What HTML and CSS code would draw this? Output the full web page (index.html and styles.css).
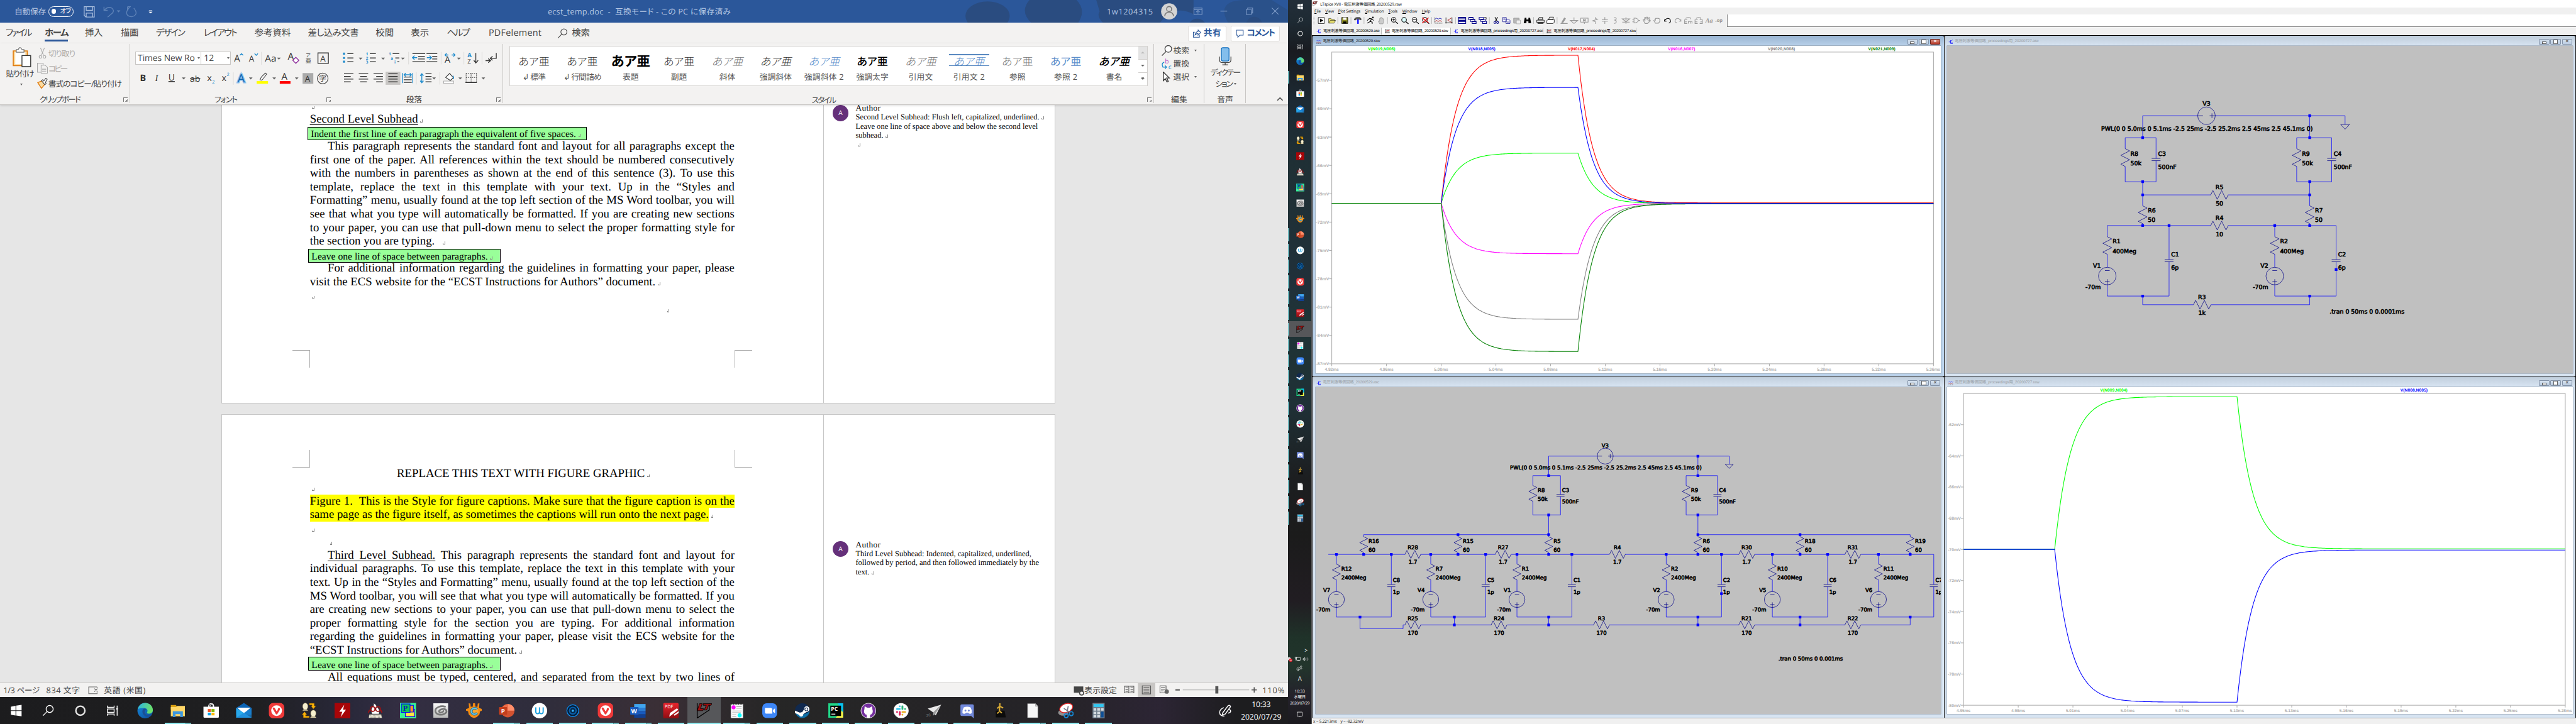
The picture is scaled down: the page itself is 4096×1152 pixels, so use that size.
FILE: index.html
```html
<!DOCTYPE html>
<html lang="ja">
<head>
<meta charset="utf-8">
<title>ecst_temp.doc</title>
<link rel="stylesheet" href="styles.css">
</head>
<body>
<svg class="defs" width="0" height="0" aria-hidden="true">
<defs>
<linearGradient id="edgeA" x1="0" y1="0" x2="1" y2="0.3"><stop offset="0" stop-color="#2bb3e8"/><stop offset="1" stop-color="#6be06a"/></linearGradient>
<linearGradient id="edgeB" x1="0" y1="0" x2="1" y2="1"><stop offset="0" stop-color="#1589dc"/><stop offset="1" stop-color="#0c4c9a"/></linearGradient>
<linearGradient id="clipG" x1="0" y1="0" x2="0" y2="1"><stop offset="0" stop-color="#fafafa"/><stop offset="1" stop-color="#b9b9b9"/></linearGradient>
<linearGradient id="redG" x1="0" y1="0" x2="0" y2="1"><stop offset="0" stop-color="#e8242c"/><stop offset="1" stop-color="#8f0d12"/></linearGradient>
</defs>
<symbol id="i-start" viewBox="0 0 48 48"><path fill="#fff" d="M8 12l14-2.5V23H8zM24 9l16-2.500V23H24zM8 25h14v13.500L8 36zM24 25h16v16l-16-2.500z"/></symbol>
<symbol id="i-search" viewBox="0 0 48 48"><g fill="none" stroke="#fff" stroke-width="2.500"><circle cx="28" cy="19" r="10.500"/><path d="M20.500 26.500L8 39"/></g></symbol>
<symbol id="i-cortana" viewBox="0 0 48 48"><circle cx="24" cy="24" r="13.500" fill="none" stroke="#e4e4e4" stroke-width="4.500"/></symbol>
<symbol id="i-task" viewBox="0 0 48 48"><g fill="none" stroke="#fff" stroke-width="2.500"><path d="M9 9v5h20V9M9 39v-5h20v5M9 19h20v10H9zM38 9v6M38 21v18"/></g><path fill="#fff" d="M35.500 16h5v5h-5z"/></symbol>
<symbol id="i-edge" viewBox="0 0 48 48"><circle cx="24" cy="24" r="23" fill="url(#edgeB)"/><path fill="url(#edgeA)" d="M2 19C6 5 17 0 26 1c13 1 21 11 21 21 0 7-5 11-11 11-5 0-8-2-6-5 3-4 0-12-9-12C12 16 6 18 2 19z"/><path fill="#1b4f95" d="M20 18c-8 6-4 21 8 24 7 1 13-2 15-5-8 3-20 0-20-9 0-5 3-6 5-6-2-3-5-4-8-4z"/></symbol>
<symbol id="i-folder" viewBox="0 0 48 48"><path fill="#d9a013" d="M3 7h15l4 5v9H3z"/><path fill="#ffd667" d="M3 13h16l3-3h23v31H3z"/><path fill="#3d97de" d="M9 26h30v17h-8V34H17v9H9z"/></symbol>
<symbol id="i-store" viewBox="0 0 48 48"><path fill="none" stroke="#fff" stroke-width="2" d="M16 13c0-14 16-14 16 0M20 13c0-8 10-14 10 0"/><path fill="#fff" d="M1 12h46v30q0 3-3 3H4q-3 0-3-3z"/><path fill="#f25022" d="M14 19h9v9h-9z"/><path fill="#7fba00" d="M25 19h9v9h-9z"/><path fill="#00a4ef" d="M14 30h9v8h-9z"/><path fill="#ffb900" d="M25 30h9v8h-9z"/></symbol>
<symbol id="i-mail" viewBox="0 0 48 48"><path fill="#0a63b5" d="M24 1l23 15v20H1V16z"/><path fill="#fff" d="M4 15h40L24 33z"/><path fill="#28a8ea" d="M1 16l46 29H1z"/><path fill="#1e88d8" d="M47 16v29H1z" opacity=".75"/><path fill="#fff" d="M5 15h38L24 29z"/></symbol>
<symbol id="i-vivaldi" viewBox="0 0 48 48"><rect x="1" y="1" width="46" height="46" rx="13" fill="#ef3939"/><circle cx="24" cy="24" r="16" fill="#fff"/><path fill="#ef3939" d="M13 19c-2-5 4-6 6-2l5 9c4-2 3-5 4-8 2-4 8-2 6 3L26 34q-2 2-4 0z"/></symbol>
<symbol id="i-swap" viewBox="0 0 48 48"><g fill="#f6efcf" stroke="#86754a"><ellipse cx="12" cy="11" rx="8" ry="10"/><path d="M4 24l3-4h10l3 4z"/><ellipse cx="36" cy="32" rx="8" ry="10"/><path d="M27 45l3-4h11l4 4z"/></g><path fill="#fcb10a" stroke="#6a4a00" d="M24 2h15v8h5l-8 9-7-9h3V7h-8zM24 45H6V36H2l8-9 7 9h-4v4h11z"/></symbol>
<symbol id="i-flash" viewBox="0 0 48 48"><path fill="#a80508" d="M0 1h48v46H0z"/><path fill="#fff" d="M29 6L14 27h9l-5 16 16-22h-9z"/></symbol>
<symbol id="i-ghost" viewBox="0 0 48 48"><path fill="#fff" stroke="#222" d="M18 2c10 3 8 9 13 13 6 6 5 13 4 19H14c-2-7-3-14 0-19 4-5 7-7 4-13z"/><g fill="none" stroke="#9c1216" stroke-width="3.500"><circle cx="16" cy="19" r="7"/><circle cx="32" cy="19" r="7"/><path d="M7 22l-4 8M40 22l4 8"/></g><path fill="#f3eedb" stroke="#333" d="M6 35h36l2 11H4z"/><path stroke="#444" stroke-dasharray="2 2" d="M9 38h30M8 41h32M8 44h32"/></symbol>
<symbol id="i-padp" viewBox="0 0 48 48"><path fill="#38f297" d="M0 1h48v46H0z"/><path fill="#ffe83e" stroke="#00f" stroke-width="2" d="M16 20h28v22H16z"/><path fill="#ff9d1e" stroke="#00f" stroke-width="2" d="M6 8h34v20H6z"/><path fill="#0ec556" stroke="#00f" stroke-width="2" d="M4 4h26v25H4z"/><text x="9" y="24" font-family="Liberation Serif" font-weight="700" font-size="23" fill="#0b1cbb">P</text></symbol>
<symbol id="i-clip" viewBox="0 0 48 48"><path fill="url(#clipG)" d="M2 2h44v43H2z"/><path fill="none" stroke="#777" stroke-width="5" stroke-linecap="round" d="M37 12c-12-4-30 2-29 13s18 14 28 8 4-15-5-14-14 5-11 9 11 0 12-3"/></symbol>
<symbol id="i-cgear" viewBox="0 0 48 48"><path fill="#f28a12" d="M8 2l5 1 1 9h6l1-10h6l1 10h6l1-9 5-1-1 14 9 3v5l-6 2-2 9-8 8-8 3-8-3-8-8-2-9-6-2v-5l9-3z"/><circle cx="24" cy="26" r="13" fill="#f6a534"/><path fill="none" stroke="#265e78" stroke-width="7" d="M33 20c-6-6-17-3-17 6s11 12 17 5"/><path fill="none" stroke="#5ec2e8" stroke-width="4" d="M33 20c-6-6-17-3-17 6s11 12 17 5"/></symbol>
<symbol id="i-ppt" viewBox="0 0 48 48"><circle cx="27" cy="24" r="20" fill="#d35230"/><path fill="#ff8f6b" d="M27 4a20 20 0 0 1 20 20H27z"/><path fill="#ed6c47" d="M27 4v20H8A20 20 0 0 1 27 4z"/><rect x="1" y="13" width="24" height="23" rx="2" fill="#c43e1c"/><text x="7" y="31" font-family="Open Sans" font-weight="700" font-size="18" fill="#fff">P</text></symbol>
<symbol id="i-waltr" viewBox="0 0 48 48"><circle cx="24" cy="24" r="23" fill="#fff"/><path fill="none" stroke="#199fe0" stroke-width="3.500" d="M13 14v13c0 8 11 8 11 0V14v13c0 8 11 8 11 0V14"/></symbol>
<symbol id="i-ring" viewBox="0 0 48 48"><circle cx="24" cy="24" r="19" fill="#0d8cf0"/><circle cx="24" cy="24" r="16.500" fill="#061d38"/><circle cx="24" cy="24" r="12" fill="#0a5ea8"/><circle cx="24" cy="24" r="8" fill="#052748"/><circle cx="24" cy="24" r="3.500" fill="#36b4ff"/></symbol>
<symbol id="i-word" viewBox="0 0 48 48"><path fill="#41a5ee" d="M12 4h34v11H12z"/><path fill="#2b7cd3" d="M12 15h34v10H12z"/><path fill="#185abd" d="M12 25h34v10H12z"/><path fill="#103f91" d="M12 35h34v10H12z"/><rect x="0" y="13" width="25" height="23" rx="2" fill="#185abd"/><text x="3" y="31" font-family="Open Sans" font-weight="700" font-size="18" fill="#fff">W</text></symbol>
<symbol id="i-pdf" viewBox="0 0 48 48"><rect x="1" y="1" width="46" height="46" rx="4" fill="url(#redG)"/><text x="5" y="17" font-family="Open Sans" font-size="14" fill="#fff">PDF</text><path fill="#fff" d="M19 42l2-11 21-14 4 4-19 15zM32 36l15-10v5L35 39z"/></symbol>
<symbol id="i-lt" viewBox="0 0 48 48"><path fill="none" stroke="#000" stroke-width="2.500" d="M3 2v44l36-24V3"/><path fill="#9b1010" stroke="#000" stroke-width="1.500" d="M10 3h8l-5 15h9l-2 6H3zM21 3h26l-3 5h-7l-6 14h-7l6-14h-9z"/></symbol>
<symbol id="i-note" viewBox="0 0 48 48"><path fill="#fff" stroke="#999" d="M6 4h36v42H6z"/><path stroke="#222" stroke-width="4" stroke-dasharray="3 2" d="M7 4h34"/><circle cx="14" cy="14" r="6" fill="#f0f"/><circle cx="32" cy="38" r="6" fill="#0ff"/><path stroke="#aaa" stroke-width="2" d="M22 12h16M22 17h16M10 25h28M10 30h26M10 36h12M10 41h12"/></symbol>
<symbol id="i-zoom" viewBox="0 0 48 48"><rect x="2" y="2" width="44" height="44" rx="13" fill="#3d87f8"/><path fill="#fff" d="M10 16h17q5 0 5 5v12H15q-5 0-5-5zM34 22l6-5v15l-6-5z"/></symbol>
<symbol id="i-steam" viewBox="0 0 48 48"><circle cx="24" cy="24" r="22" fill="#10294f"/><path fill="#0e6ea5" d="M3 31q21 12 43-5c-2 12-12 20-22 20S6 39 3 31z"/><path fill="#fff" d="M2 24l15 6c3-2 6-1 6-1l6-9c0-13 17-11 16 0-1 7-8 8-9 8l-9 6c0 10-12 9-12 3L2 31z"/><circle cx="36" cy="20" r="5.500" fill="#10294f"/><circle cx="36" cy="20" r="3.500" fill="#fff"/></symbol>
<symbol id="i-pc" viewBox="0 0 48 48"><path fill="#21d789" d="M2 2h44v43H2z"/><path fill="#fcf84a" d="M24 45L46 20v25z"/><path fill="#07c3f2" d="M30 2h16v28z"/><path fill="#000" d="M8 9h32v31H8z"/><text x="10" y="24" font-family="Open Sans" font-weight="700" font-size="16" fill="#fff">PC</text><path fill="#fff" d="M11 33h12v2.500H11z"/></symbol>
<symbol id="i-git" viewBox="0 0 48 48"><circle cx="24" cy="24" r="23" fill="#ddd"/><circle cx="24" cy="24" r="21" fill="#742f9e"/><path fill="#fff" d="M13 11l7 4h8l7-4 1 9c3 9-1 15-7 16v9H19v-9c-6-1-10-7-7-16z"/></symbol>
<symbol id="i-slack" viewBox="0 0 48 48"><circle cx="24" cy="24" r="22.500" fill="#fff"/><g stroke-width="5.500" stroke-linecap="round"><path stroke="#36c5f0" d="M20 11v0M12 19h8"/><path stroke="#2eb67d" d="M28 11v8M36 19h0"/><path stroke="#ecb22e" d="M28 36v0M28 28h8"/><path stroke="#e01e5a" d="M20 28v8M12 28h0"/></g></symbol>
<symbol id="i-plane" viewBox="0 0 48 48"><path fill="#e9e9e9" d="M6 18L46 6 30 38l-8-9z"/><path fill="#9d9d9d" d="M46 6L22 29v10l7-6z"/><text x="2" y="42" transform="rotate(-8 2 42)" font-family="Open Sans" font-size="11" fill="#888">20</text></symbol>
<symbol id="i-discord" viewBox="0 0 48 48"><path fill="#7289da" d="M8 5h32q4 0 4 4v38l-8-7H8q-4 0-4-4V9q0-4 4-4z"/><path fill="#fff" d="M14 14q10-4 20 0 5 8 4 17-5 4-9 1l-2-2h-6l-2 2q-4 3-9-1-1-9 4-17z"/><circle cx="19" cy="24" r="2.800" fill="#7289da"/><circle cx="29" cy="24" r="2.800" fill="#7289da"/></symbol>
<symbol id="i-robot" viewBox="0 0 48 48"><path fill="#0c0c0c" d="M12 24h26l4 20H12z"/><path fill="none" stroke="#d9ab35" stroke-width="4" d="M24 2v9l-8 6M24 11l10 5M23 13v12l7 6M16 32l6-4"/></symbol>
<symbol id="i-file" viewBox="0 0 48 48"><path fill="#f7f7f7" stroke="#777" d="M9 3h24l7 8v34H9z"/><path fill="#ccc" stroke="#777" d="M33 3v8h7z"/></symbol>
<symbol id="i-snip" viewBox="0 0 48 48"><ellipse cx="16" cy="30" rx="15" ry="9" fill="#8f8f8f"/><ellipse cx="25" cy="16" rx="20" ry="13" transform="rotate(-20 25 16)" fill="#fff" stroke="#e02020" stroke-width="2.500"/><g fill="none" stroke="#1686d2" stroke-width="3.500"><circle cx="25" cy="39" r="6"/><circle cx="40" cy="33" r="6"/></g><path stroke="#778" stroke-width="3" d="M27 33l4-23M36 29L18 17"/></symbol>
<symbol id="i-calc" viewBox="0 0 48 48"><path fill="#6e7d8c" d="M6 1h36v46H6z"/><path fill="#33c7f2" d="M9 4h30v9H9z"/><path fill="#d3dae0" d="M9 17h8v7H9zM20 17h8v7h-8zM31 17h8v7h-8zM9 27h8v7H9zM20 27h8v7h-8zM9 37h8v7H9zM20 37h8v7h-8z"/><path fill="#0e4f96" d="M31 27h8v17h-8z"/></symbol>
<symbol id="i-pen" viewBox="0 0 48 48"><path fill="none" stroke="#fff" stroke-width="3" d="M14 32L32 8q7-4 8 3L23 35l-9 2zM18 14c-18 8-18 26 2 28M34 20c10 2 8 10-2 12"/></symbol>
<symbol id="i-asc" viewBox="0 0 16 16"><path fill="none" stroke="#00f" stroke-width="1.600" d="M1 8h5M7 2v12M14 1L7 6M7 9l6 5M13 10v4H9"/></symbol>
<symbol id="i-raw" viewBox="0 0 16 16"><path fill="#c4c4c4" d="M2 0h14v13H2z"/><path fill="none" stroke="#000" stroke-width="1.200" d="M2 0v15M0 13h16"/><path fill="none" stroke="#d00" stroke-width="1.500" d="M3 9l4-4 3 2 5-4"/></symbol>
<symbol id="i-wave" viewBox="0 0 16 16"><path fill="none" stroke="#00f" d="M0 5l3-3 3 3 4-3 3 3 3-3"/><path fill="none" stroke="#a00" d="M0 11l3-3 3 3 4-3 3 3 3-3"/><path stroke="#000" stroke-dasharray="2 1" d="M0 14h16"/></symbol>
</svg>

<div class="desktop">
<!-- ============ left monitor ============ -->
<section class="monitor-left">
<div class="word">
<header class="titlebar">
  <svg class="titlebar-art" viewBox="2800 0 1040 68"><g fill="#2a4c80"><ellipse cx="2945" cy="48" rx="66" ry="44"/><path d="M3070 0h140q30 30 5 68h-140q-35-34-5-68zM3269 0h290v42q-60-30-100 26h-170q-20-20-10-34z"/><path opacity=".6" d="M3662 68q-40-70 60-68h70l48 30v38z"/><circle cx="3740" cy="74" r="24"/><circle cx="3570" cy="84" r="28"/></g></svg>
  <span class="tb-autosave" data-w="94">自動保存</span>
  <span class="toggle"><i></i><b>オフ</b></span>
  <svg class="tb-icons" viewBox="240 0 230 68"><g fill="none" stroke-width="2.500"><path stroke="#a9bede" d="M251 20h30v31h-25l-5-5zM257 20v11h19V20M257 51V39h19v12"/><path stroke="#5f83b8" d="M310 20v11h11M311 30q12-12 22-6 12 10-4 20l-8 7M380 20v10M380 20h10M399 24q16 20-6 26-20-2-14-18l8-12"/></g><path fill="#5f83b8" d="M348 31h11l-5.500 6z"/><path fill="#fff" d="M444 31h10v2h-10zM443 35h12l-6 5z"/></svg>
  <span class="tb-title" data-w="546">ecst_temp.doc&nbsp; -&nbsp; 互換モード - この PC に保存済み</span>
  <span class="tb-user" data-w="138">1w1204315</span>
  <svg class="tb-right" viewBox="3455 0 380 68"><circle cx="3485" cy="34" r="24" fill="#d4d4d4"/><g fill="none" stroke="#777" stroke-width="3"><circle cx="3485" cy="27" r="7.500"/><path d="M3472 48c0-16 26-16 26 0"/></g><g fill="none" stroke="#7f9cc8" stroke-width="2"><path d="M3559 24h24v19h-24zM3559 29h24M3571 41v-9M3566 36l5-5 5 5M3638 33h20M3715 28h15v15h-15zM3719 28v-4h15v15h-4M3791 23l20 20M3811 23l-20 20"/></g></svg>
</header>

<nav class="tabs">
  <span data-w="75">ファイル</span><span class="active" data-w="70">ホーム</span><span data-w="53">挿入</span><span data-w="53">描画</span><span data-w="84">デザイン</span><span data-w="98">レイアウト</span><span data-w="108">参考資料</span><span data-w="151">差し込み文書</span><span data-w="54">校閲</span><span data-w="54">表示</span><span data-w="66">ヘルプ</span><span data-w="158">PDFelement</span>
  <svg viewBox="0 0 30 30"><g fill="none" stroke="#444" stroke-width="2"><circle cx="18" cy="11" r="9"/><path d="M11 18L1 29"/></g></svg><span data-w="54">検索</span>
  <div class="share-row"><span class="share"><svg viewBox="0 0 24 24"><path fill="none" stroke="#2b579a" stroke-width="2" d="M5 8H1v15h18v-7M6 16q1-9 9-10V1l8 8-8 8v-5q-5 0-9 4z"/></svg><b data-w="52">共有</b></span><span class="share"><svg viewBox="0 0 24 24"><path fill="none" stroke="#2b579a" stroke-width="2" d="M2 2h20v15H12l-6 6v-6H2z"/></svg><b data-w="83">コメント</b></span></div>
</nav>

<div class="ribbon">
  <div class="group g-clip">
    <div class="body clip-body">
      <div class="paste"><svg viewBox="37 138 60 64"><path fill="#fbdba0" stroke="#e07c10" stroke-width="3" d="M39 151h42v44H39z"/><path fill="#fff" d="M45 155h30v36H45z"/><path fill="#fff" stroke="#777" stroke-width="2.500" d="M48 155v-8h6q5-12 11 0h6v8z"/><path fill="#fff" stroke="#333" stroke-width="2.500" d="M65 165h26v33H65z"/></svg><span data-w="82">貼り付け</span><i class="caret"></i></div>
      <div class="clip-list">
        <div class="dim"><svg viewBox="0 0 32 32"><g fill="none" stroke="#aaa" stroke-width="2"><path d="M10 0l9 22M22 0l-9 22"/><circle cx="10" cy="27" r="4"/><circle cx="22" cy="27" r="4"/></g></svg><span data-w="79">切り取り</span></div>
        <div class="dim"><svg viewBox="0 0 32 32"><g fill="#f3f2f1" stroke="#aaa" stroke-width="2"><path d="M1 1h17v27H1z"/><path d="M12 7h12l7 7v17H12z"/></g><path stroke="#aaa" stroke-width="2" d="M15 19h12M15 25h12"/></svg><span data-w="54">コピー</span></div>
        <div><svg viewBox="0 0 32 32"><path fill="#fbdba0" stroke="#e07c10" stroke-width="2.500" d="M2 14l12-5 9 10-10 12z"/><path fill="#fff" stroke="#444" stroke-width="2" d="M13 8l4-3 3 4 6-8 4 3-5 9 2 4-4 3z"/></svg><span data-w="218">書式のコピー/貼り付け</span></div>
      </div>
    </div>
    <div class="label"><span data-w="120">クリップボード</span><i class="launch"></i></div>
  </div>

  <div class="group g-font">
    <div class="body">
      <div class="font-row"><div class="combo c-name"><span data-w="170">Times New Ro</span><i class="caret"></i></div><div class="combo c-size"><span>12</span><i class="caret"></i></div>
      <svg class="font-ic1" viewBox="690 150 300 48"><g font-family="Open Sans" fill="#333"><text x="698" y="183" font-size="28">A</text><text x="742" y="183" font-size="25">A</text><text x="790" y="183" font-size="27" textLength="34" lengthAdjust="spacingAndGlyphs">Aa</text><text x="858" y="179" font-size="29">A</text></g><g fill="none" stroke="#1e8bcd" stroke-width="2.500"><path d="M715 165l5-5 5 5M759 160l5 5 5-5"/></g><path stroke="#c8c6c4" d="M779.500 155v38"/><path class="car" d="M826 172h11l-5.500 6z"/><path fill="#fff" stroke="#8e2f9c" stroke-width="2.500" d="M882 171l9 9-9 9-9-9z"/><g font-family="Noto Sans CJK JP" fill="#333"><text x="912" y="170" font-size="15">ア</text><text x="911" y="188" font-size="17">亜</text></g><path fill="none" stroke="#333" stroke-width="2.500" d="M948 158h31v31h-31z"/><text x="955" y="183" font-family="Open Sans" font-size="25" fill="#333">A</text></svg></div>
      <svg class="font-ic2" viewBox="404 210 590 48"><g font-family="Open Sans" fill="#333"><text x="418" y="242" font-size="27" font-weight="700">B</text><text x="463" y="242" font-size="27" font-family="Liberation Serif" font-style="italic">I</text><text x="503" y="240" font-size="26" text-decoration="underline">U</text><text x="567" y="243" font-size="24" text-decoration="line-through" textLength="31" lengthAdjust="spacingAndGlyphs">ab</text><text x="618" y="242" font-size="27">x</text><text x="662" y="242" font-size="27">x</text><text x="709" y="246" font-size="34" fill="#0f62ac" stroke="#8cc0ec" stroke-width="6" paint-order="stroke">A</text><text x="840" y="238" font-size="28">A</text></g><g font-family="Open Sans" font-size="14" fill="#1e8bcd"><text x="633" y="250">2</text><text x="677" y="227">2</text></g><path stroke="#c8c6c4" d="M696.500 216v37"/><path class="car" d="M543 231h11l-5.500 6zM743 231h11l-5.500 6zM813 231h11l-5.500 6zM880 231h11l-5.500 6z"/><path fill="#fff" stroke="#444" stroke-width="2" d="M776 238l4-8 12-12 4 3-9 12-5 6z"/><path fill="#ff0" d="M766 242h34v8h-34z"/><path fill="#f00" d="M835 242h32v8h-32z"/><path fill="#aaa" d="M903 218h32v32h-32z"/><text x="910" y="243" font-family="Open Sans" font-size="25" fill="#333">A</text><circle cx="963" cy="234" r="16" fill="none" stroke="#333" stroke-width="2"/><text x="952" y="242" font-family="Noto Sans CJK JP" font-size="22" fill="#333">字</text></svg>
    </div>
    <div class="label"><span data-w="66">フォント</span><i class="launch"></i></div>
  </div>

  <div class="group g-para">
    <div class="body">
      <svg viewBox="1010 150 480 108"><g stroke="#333" stroke-width="2.500" fill="none"><path d="M1035 160h18M1035 173h18M1035 184h18M1102 160h18M1102 173h18M1102 184h18M1170 160h20M1178 173h12M1184 184h6M1229 160h38M1246 168h20M1246 176h20M1229 184h38M1271 160h32M1288 168h15M1288 176h15M1271 184h32"/><path d="M1418 158v29M1412 180l6 8 7-8M1479 158v16h-18M1468 168l-7 6 7 6M1447 181h14M1455 175l7 6-7 6"/><path d="M1025 220h28M1025 228h20M1025 236h28M1025 244h20M1069 220h28M1073 228h20M1069 236h28M1073 244h20M1113 220h28M1121 228h20M1113 236h28M1121 244h20"/></g><path fill="#c8c6c4" d="M1149 214h44v39h-44z"/><g stroke="#333" stroke-width="2.500" fill="none"><path d="M1157 220h28M1157 228h28M1157 236h28M1157 244h28M1203 230h24M1203 238h24M1203 246h24M1268 220h18M1268 228h18M1268 236h18M1268 244h18"/><path stroke-dasharray="3 3" stroke-width="2" d="M1389 219h31M1389 219v25M1420 219v25M1404 219v25M1389 231h31"/><path stroke-width="3" d="M1387 246h34"/><path stroke-width="2" d="M1328 231l12-12 11 13-9 8z" fill="#fff"/></g><path fill="#fff" stroke="#aaa" stroke-width="2" d="M1322 242h30v7h-30z"/><g fill="none" stroke="#1e8bcd" stroke-width="2.500"><path d="M1200 218v30M1230 218v30M1204 223h22M1209 218l-5 5 5 5M1221 218l5 5-5 5M1257 220v27M1252 226l5-6 5 6M1252 241l5 6 5-6M1229 172h14M1235 166l-6 6 6 6M1272 172h14M1280 166l6 6-6 6M1326 164h10M1331 159l-5 5 5 5M1346 164h10M1351 159l5 5-5 5M1349 226q4 3 2 10"/></g><path fill="#1e8bcd" d="M1022 157h6v6h-6zM1022 170h6v6h-6zM1022 181h6v6h-6z"/><g font-family="Open Sans" font-size="12" font-weight="700" fill="#1e8bcd"><text x="1090" y="165">1</text><text x="1090" y="178">2</text><text x="1090" y="190">3</text><text x="1158" y="165">1</text><text x="1164" y="178">a</text><text x="1175" y="189">i</text><text x="1393" y="171" font-size="18">A</text></g><g font-family="Open Sans" fill="#333"><text x="1325" y="188" font-size="27">A</text><text x="1393" y="189" font-size="18">Z</text></g><path class="car" d="M1069 172h11l-5.500 6zM1136 172h11l-5.500 6zM1195 172h11l-5.500 6zM1362 172h11l-5.500 6zM1288 231h11l-5.500 6zM1366 231h11l-5.500 6zM1435 231h11l-5.500 6z"/><path stroke="#c8c6c4" d="M1217.500 155v37M1314.500 155v37M1382.500 155v37M1436.500 155v37M1240.500 215v37M1310.500 215v37"/></svg>
    </div>
    <div class="label"><span data-w="47">段落</span><i class="launch"></i></div>
  </div>

  <div class="group g-style">
    <div class="gallery">
      <div class="st"><b>あア亜</b><span data-w="68">↲ 標準</span></div>
      <div class="st"><b>あア亜</b><span data-w="112">↲ 行間詰め</span></div>
      <div class="st big"><b>あア亜</b><span>表題</span></div>
      <div class="st"><b>あア亜</b><span>副題</span></div>
      <div class="st it gr"><b>あア亜</b><span>斜体</span></div>
      <div class="st it"><b>あア亜</b><span>強調斜体</span></div>
      <div class="st it bl"><b>あア亜</b><span data-w="118">強調斜体 2</span></div>
      <div class="st bd"><b>あア亜</b><span>強調太字</span></div>
      <div class="st it gr"><b>あア亜</b><span>引用文</span></div>
      <div class="st it bl ln"><b>あア亜</b><span data-w="94">引用文 2</span></div>
      <div class="st gr"><b>あア亜</b><span>参照</span></div>
      <div class="st bl bd2"><b>あア亜</b><span data-w="70">参照 2</span></div>
      <div class="st it bd"><b>あア亜</b><span>書名</span></div>
      <div class="scroll"><i class="off"><em class="up"></em></i><i><em></em></i><i><em class="more"></em></i></div>
    </div>
    <div class="label"><span data-w="70">スタイル</span><i class="launch"></i></div>
  </div>

  <div class="group g-edit">
    <div class="body edit-list">
      <div><svg viewBox="0 0 32 32"><g fill="#fff" stroke="#444" stroke-width="2.500"><circle cx="20" cy="11" r="10"/><path d="M13 19L1 31"/></g></svg><span data-w="48">検索</span><i class="caret"></i></div>
      <div><svg viewBox="0 0 32 32"><g font-family="Open Sans" font-size="19"><text x="10" y="15" fill="#b146c2">b</text><text x="20" y="31" fill="#1e8bcd">c</text></g><path fill="none" stroke="#1e8bcd" stroke-width="2.500" d="M8 11q-7 2-6 9l2 6h9M10 21l5 5-5 5"/></svg><span data-w="48">置換</span></div>
      <div><svg viewBox="0 0 32 32"><path fill="#fff" stroke="#333" stroke-width="2.500" d="M5 1v26l6-6 5 10 4-2-5-10h8z"/></svg><span data-w="48">選択</span><i class="caret"></i></div>
    </div>
    <div class="label"><span data-w="48">編集</span></div>
  </div>
  <div class="group g-voice">
    <div class="body voice"><svg viewBox="0 0 40 58"><rect x="8" y="2" width="24" height="42" rx="5" fill="#83beec" stroke="#0f6cbd" stroke-width="2.500"/><path fill="none" stroke="#444" stroke-width="2.500" d="M2 30v10q0 9 9 9h18q9 0 9-9V30M20 49v6M11 56h18"/></svg><span data-w="87">ディクテー</span><span class="v2"><u data-w="50">ション</u><i class="caret"></i></span></div>
    <div class="label"><span data-w="48">音声</span></div>
  </div>
  <div class="collapse"><svg viewBox="0 0 20 12"><path fill="none" stroke="#555" stroke-width="3" d="M2 11l8-8 8 8"/></svg></div>
</div>

<main class="doc">
  <article class="page p1">
    <div class="text">
      <div class="l"><q></q></div>
      <div class="l"><u>Second Level Subhead</u><q></q></div>
      <div class="l"><span class="tip t1">Indent the first line of each paragraph the equivalent of five spaces.<q></q></span></div>
      <div class="l j in">This paragraph represents the standard font and layout for all paragraphs except the</div>
      <div class="l j">first one of the paper. All references within the text should be numbered consecutively</div>
      <div class="l j">with the numbers in parentheses as shown at the end of this sentence (3). To use this</div>
      <div class="l j">template, replace the text in this template with your text. Up in the “Styles and</div>
      <div class="l j">Formatting” menu, usually found at the top left section of the MS Word toolbar, you will</div>
      <div class="l j">see that what you type will automatically be formatted. If you are creating new sections</div>
      <div class="l j">to your paper, you can use that pull-down menu to select the proper formatting style for</div>
      <div class="l">the section you are typing. &nbsp;<q></q></div>
      <div class="l"><span class="tip t2">Leave one line of space between paragraphs.<q></q></span></div>
      <div class="l j in">For additional information regarding the guidelines in formatting your paper, please</div>
      <div class="l">visit the ECS website for the “ECST Instructions for Authors” document.<q></q></div>
      <div class="l"><q></q></div>
      <div class="l far"><q></q></div>
    </div>
    <i class="crop bl"></i><i class="crop br"></i>
    <aside class="comments"><div class="comment c1"><i>A</i><div><b data-w="75">Author</b><p>Second Level Subhead: Flush left, capitalized, underlined.<q></q></p><p>Leave one line of space above and below the second level</p><p>subhead.<q></q></p><p><q></q></p></div></div></aside>
  </article>
  <article class="page p2">
    <div class="text">
      <div class="l mid">REPLACE THIS TEXT WITH FIGURE GRAPHIC<q></q></div>
      <div class="l"><q></q></div>
      <div class="l j hl">Figure 1.&nbsp; This is the Style for figure captions. Make sure that the figure caption is on the</div>
      <div class="l"><mark>same page as the figure itself, as sometimes the captions will run onto the next page.</mark><q></q></div>
      <div class="l"><q></q></div>
      <div class="l in"><q></q></div>
      <div class="l j in"><u>Third Level Subhead.</u> This paragraph represents the standard font and layout for</div>
      <div class="l j">individual paragraphs. To use this template, replace the text in this template with your</div>
      <div class="l j">text. Up in the “Styles and Formatting” menu, usually found at the top left section of the</div>
      <div class="l j">MS Word toolbar, you will see that what you type will automatically be formatted. If you</div>
      <div class="l j">are creating new sections to your paper, you can use that pull-down menu to select the</div>
      <div class="l j">proper formatting style for the section you are typing. For additional information</div>
      <div class="l j">regarding the guidelines in formatting your paper, please visit the ECS website for the</div>
      <div class="l">“ECST Instructions for Authors” document.<q></q></div>
      <div class="l"><span class="tip t3">Leave one line of space between paragraphs.<q></q></span></div>
      <div class="l j in">All equations must be typed, centered, and separated from the text by two lines of</div>
    </div>
    <i class="crop tl"></i><i class="crop tr"></i>
    <aside class="comments"><div class="comment c2"><i>A</i><div><b data-w="75">Author</b><p>Third Level Subhead: Indented, capitalized, underlined,</p><p>followed by period, and then followed immediately by the</p><p>text.<q></q></p></div></div></aside>
  </article>
</main>

<footer class="status">
  <span class="s1" data-w="108">1/3 ページ</span><span class="s2" data-w="101">834 文字</span>
  <svg class="s3" viewBox="0 0 32 24"><path fill="none" stroke="#666" stroke-width="2" d="M27 2H2v20h25v-4M27 2v3M19 7l9 9M28 7l-9 9"/></svg>
  <span data-w="125">英語 (米国)</span>
  <svg class="s4" viewBox="3200 2040 32 36"><path fill="#444" d="M3201 2046h28v14h-10l-2 5h-16z"/><circle cx="3224" cy="2066" r="6" fill="none" stroke="#444" stroke-width="3"/></svg><span data-w="97">表示設定</span>
  <svg class="s5" viewBox="3340 2036 410 44"><path fill="#c8c6c4" d="M3393 2036h52v44h-52z"/><g fill="none" stroke="#555" stroke-width="2"><path d="M3353 2047h13v20h-13zM3368 2047h13v20h-13M3356 2052h8M3356 2057h8M3356 2062h8M3371 2052h8M3371 2057h8M3371 2062h8M3406 2046h25v24h-25zM3410 2051h17M3410 2056h17M3410 2061h17M3410 2066h17M3459 2046h18v21h-18zM3462 2051h12M3462 2056h12M3462 2061h8"/></g><circle cx="3479" cy="2063" r="6.500" fill="#666"/><path stroke="#a8a8a8" stroke-width="2" d="M3527 2058h198"/><path fill="#555" d="M3505 2056h13v4h-13zM3732 2056.500h16v3h-16zM3738.500 2050h3v16h-3zM3624 2047h9v22h-9z"/></svg>
  <span class="s6" data-w="68">110%</span>
</footer>
</div>
<div class="taskbar" id="taskbar">
  <div class="apps"></div>
  <svg class="tray-pen"><use href="#i-pen"/></svg>
  <div class="clock"><span data-w="56">10:33</span><span data-w="121">2020/07/29</span></div>
</div>
</section>

<!-- ============ side taskbar ============ -->
<div class="sidebar" id="sidebar">
  <div class="apps"></div>
  <div class="side-tray">
    <span class="chev">&gt;</span>
    <svg class="tray3" viewBox="0 0 72 18"><path fill="#ddd" d="M0 6q6-6 10 0l3 6H0z"/><circle cx="10" cy="12" r="5" fill="#e0202c"/><path stroke="#fff" stroke-width="1.500" d="M7 12h6"/><g fill="none" stroke="#fff" stroke-width="1.300"><path d="M27 4h12v8H27zM23 3h5v3h-5zM25 6v7M30 14h7M47 7v4h2l3 3V4l-3 3zM55 7q2 2 0 4"/><path stroke="#888" d="M58 5q3 4 0 8M60 3q4 6 0 12"/></g></svg>
    <svg class="pen"><use href="#i-pen"/></svg>
    <span class="ime">A</span>
    <span class="t">10:33</span><span class="t d" data-w="34">水曜日</span><span class="t" data-w="58">2020/07/29</span>
    <svg class="note" viewBox="0 0 18 18"><path fill="none" stroke="#fff" stroke-width="1.500" d="M1 2h15v12h-5l-2 3-2-3H1z"/></svg>
  </div>
</div>

<!-- ============ LTspice ============ -->
<section class="lt">
  <div class="lt-title"><svg><use href="#i-lt"/></svg><span data-w="243">LTspice XVII - 電圧刺激等価回路_20200529.raw</span></div>
  <div class="lt-menu"><span>File</span><span>View</span><span data-w="66">Plot Settings</span><span data-w="56">Simulation</span><span data-w="27">Tools</span><span data-w="44">Window</span><span>Help</span></div>
  <div class="lt-tools"><svg id="tools" viewBox="3912 44 1238 36"></svg></div>
  <div class="lt-tabs"><span><svg><use href="#i-asc"/></svg><b data-w="168">電圧刺激等価回路_20200529.asc</b></span><span class="on"><svg><use href="#i-raw"/></svg><b data-w="168">電圧刺激等価回路_20200529.raw</b></span><span><svg><use href="#i-asc"/></svg><b data-w="245">電圧刺激等価回路_proceedings用_20200727.asc</b></span><span><svg><use href="#i-raw"/></svg><b data-w="245">電圧刺激等価回路_proceedings用_20200727.raw</b></span></div>
  <div class="mdi">
    <div class="win active"><div class="win-t"><svg><use href="#i-wave"/></svg><b data-w="170">電圧刺激等価回路_20200529.raw</b><i class="wb min"></i><i class="wb max"></i><i class="wb close">×</i></div><svg class="client white" id="plot1" viewBox="3923 137 1864 976" preserveAspectRatio="none"></svg></div>
    <div class="win"><div class="win-t"><svg><use href="#i-asc"/></svg><b data-w="250">電圧刺激等価回路_proceedings用_20200727.asc</b><i class="wb min"></i><i class="wb max"></i><i class="wb close">×</i></div><svg class="client" id="sch1" viewBox="5804 137 1865 976" preserveAspectRatio="none"></svg></div>
    <div class="win"><div class="win-t"><svg><use href="#i-asc"/></svg><b data-w="168">電圧刺激等価回路_20200529.asc</b><i class="wb min"></i><i class="wb max"></i><i class="wb close">×</i></div><svg class="client" id="sch2" viewBox="3923 1154 1864 976" preserveAspectRatio="none"></svg></div>
    <div class="win"><div class="win-t"><svg><use href="#i-wave"/></svg><b data-w="252">電圧刺激等価回路_proceedings用_20200727.raw</b><i class="wb min"></i><i class="wb max"></i><i class="wb close">×</i></div><svg class="client white" id="plot2" viewBox="5804 1154 1865 976" preserveAspectRatio="none"></svg></div>
  </div>
  <div class="lt-status"><span data-w="150">x = 5.2213ms &nbsp; &nbsp;y = -82.32mV</span></div>
</section>
</div>
<script src="app.js"></script>
</body>
</html>
```
FILE: styles.css
```css
* { box-sizing: border-box; }
html, body { margin: 0; overflow: hidden; background: #1d1d1f; }
body { width: 4096px; height: 1152px; text-rendering: geometricPrecision; }
.defs { position: absolute; }
i, em { font-style: normal; }
q { quotes: none; }
q::before, q::after { content: none; }
.desktop { zoom: .5333333; width: 7680px; height: 2160px; display: grid; grid-template-columns: 3840px 72px 3768px; overflow: hidden; font-family: "Open Sans", "Noto Sans CJK JP", sans-serif; white-space: nowrap; }
.monitor-left { height: 2160px; display: flex; flex-direction: column; overflow: hidden; }
.word { height: 2080px; display: flex; flex-direction: column; font-feature-settings: "palt"; color: #444; }
[data-w] { display: inline-block; }

/* title bar */
.titlebar { height: 68px; flex: none; background: #2b579a; color: #b4c6e2; font-size: 24px; display: flex; align-items: center; position: relative; line-height: 68px; }
.titlebar > * { flex: none; position: relative; }
.titlebar .titlebar-art { position: absolute; right: 0; top: 0; width: 1040px; height: 68px; }
.tb-autosave { margin-left: 43px; }
.toggle { width: 76px; height: 32px; margin-left: 7px; border: 2px solid #fff; border-radius: 16px; display: flex; align-items: center; padding: 0 8px 0 7px; gap: 11px; color: #fff; font-size: 20px; }
.toggle i { width: 15px; height: 15px; border-radius: 50%; background: #fff; }
.toggle b { font-weight: 400; letter-spacing: -2px; }
.tb-icons { width: 230px; height: 68px; margin-left: 20px; }
.tb-title { margin-left: 1163px; }
.tb-user { margin-left: 1121px; }
.tb-right { width: 380px; height: 68px; margin-left: 17px; }

/* tabs */
.tabs { height: 62px; flex: none; background: #f3f2f1; padding: 0 0 0 17px; display: grid; grid-template-columns: 116px 120px 107px 105px 142px 152px 159px 202px 105px 107px 125px 207px 41px 60px 1fr; align-items: center; font-size: 27px; line-height: 62px; }
.tabs > span { justify-self: start; height: 62px; }
.tabs .active { font-weight: 700; border-bottom: 6px solid #2b579a; height: 56px; line-height: 62px; align-self: start; }
.tabs > svg { width: 30px; height: 30px; }
.share-row { display: flex; gap: 15px; justify-content: flex-end; padding: 2px 25px 0 0; }
.share { height: 47px; line-height: 43px; background: #fff; border: 2px solid #e1dfdd; border-radius: 4px; display: flex; align-items: center; gap: 8px; padding: 0 13px; color: #2b579a; font-size: 26px; }
.share svg { width: 24px; height: 24px; flex: none; }

/* ribbon */
.ribbon { height: 183px; flex: none; background: #f3f2f1; border-bottom: 2px solid #c8c6c4; display: flex; position: relative; z-index: 2; box-shadow: 0 2px 6px rgba(0,0,0,.15); font-size: 24px; }
.group { flex: none; height: 181px; margin: 0; display: flex; flex-direction: column; position: relative; background: linear-gradient(#c8c6c4, #c8c6c4) right 2px / 2px 177px no-repeat; }
.body { height: 150px; flex: none; }
.label { height: 31px; display: flex; align-items: center; justify-content: center; line-height: 31px; font-size: 24px; padding-top: 3px; }
.launch { position: absolute; right: 9px; bottom: 8px; width: 13px; height: 13px; border: solid #777; border-width: 2px 0 0 2px; background: linear-gradient(135deg, transparent 50%, #777 50%) 5px 5px / 7px 7px no-repeat; }
.caret { width: 0; height: 0; border: 5px solid transparent; border-top: 6px solid #666; border-bottom: 0; flex: none; }
.car { fill: #666; }
.g-clip { width: 389px; } .g-clip .label { padding-right: 34px; }
.g-font { width: 606px; background: none; } .g-font .label { padding-right: 39px; }
.g-para { width: 506px; } .g-para .label { padding-right: 27px; }
.g-style { width: 1940px; } .g-style .label { padding-right: 32px; }
.g-style .launch { right: 8px; }
.g-edit { width: 149px; } .g-voice { width: 125px; }
.clip-body { display: flex; padding: 8px 0 0 18px; }
.paste { width: 92px; display: flex; flex-direction: column; align-items: flex-start; }
.paste svg { width: 60px; height: 64px; margin-left: 19px; flex: none; }
.paste span { line-height: 34px; margin-bottom: 12px; margin-top: 1px; }
.paste .caret { margin-left: 42px; }
.clip-list div { height: 45px; display: flex; align-items: center; gap: 2px; line-height: 45px; }
.clip-list { margin-top: -2px; }
.clip-list svg { width: 32px; height: 32px; flex: none; }
.clip-list .dim { color: #b1aeab; }
.font-row { display: flex; padding: 20px 0 0 15px; height: 80px; }
.combo { height: 40px; background: #fff; border: 2px solid #c8c6c4; display: flex; align-items: center; justify-content: space-between; font-size: 26px; line-height: 36px; padding: 0 1px 0 5px; margin-top: 4px; }
.c-name { width: 196px; } .c-size { width: 89px; border-left: 0; padding: 0 3px 0 8px; }
.font-ic1 { width: 300px; height: 48px; flex: none; margin-left: 1px; }
.font-ic2 { width: 590px; height: 48px; margin-left: 15px; display: block; }
.g-para .body svg { width: 480px; height: 108px; margin: 20px 0 0 15px; display: block; }
.gallery { margin: 6px 0 26px 17px; width: 1904px; height: 120px; flex: none; background: #fff; border: 2px solid #d2d0ce; display: flex; }
.g-style .label { margin-top: -1px; }
.st { width: 144.150px; flex: none; display: flex; flex-direction: column; align-items: center; color: #555; font-size: 24px; }
.st b { height: 70px; line-height: 86px; font-weight: 300; font-size: 32px; color: #333; font-family: "Noto Sans CJK JP", sans-serif; }
.st span { line-height: 44px; }
.st.big b { font-size: 40px; font-weight: 700; color: #000; }
.st.it b { font-style: italic; } .st.gr b { color: #777; } .st.bl b { color: #5b8ecb; }
.st.bd b { font-weight: 500; color: #000; } .st.bd2 b { font-weight: 400; }
.st.ln b { border-bottom: 3px solid #4a7ebb; background: linear-gradient(#4a7ebb, #4a7ebb) 0 24px / 100% 3px no-repeat; height: 59px; padding: 0 13px; margin-bottom: 11px; }
.scroll { flex: 1; display: flex; flex-direction: column; }
.scroll i { flex: 1; border-top: 2px solid #d2d0ce; display: flex; align-items: center; justify-content: center; }
.scroll .off { background: #e4e4e4; border: 0; }
.scroll em { border: 6px solid transparent; border-top: 7px solid #666; border-bottom: 0; }
.scroll .up { border-top: 0; border-bottom: 7px solid #bbb; }
.scroll .more { box-shadow: 0 -4px 0 -2px #666; }
.edit-list { padding: 2px 0 0 23px; }
.edit-list div { height: 39px; display: flex; align-items: center; gap: 2px; line-height: 39px; }
.edit-list svg { width: 32px; height: 32px; flex: none; }
.edit-list .caret { margin-left: 12px; }
.voice { display: flex; flex-direction: column; align-items: center; padding-top: 9px; }
.voice svg { width: 38px; height: 58px; flex: none; }
.voice > span { line-height: 34px; height: 34px; margin-top: 2px; }
.voice .v2 { display: flex; align-items: center; gap: 5px; margin: 0; padding-left: 4px; }
.voice u { text-decoration: none; }
.collapse { flex: 1; display: flex; align-items: flex-end; justify-content: flex-end; padding: 0 13px 10px 0; }
.collapse svg { width: 20px; height: 12px; }

/* document */
.doc { flex: 1; background: #e6e6e6; overflow: hidden; padding-left: 660px; }
.page { width: 2487px; background: linear-gradient(#c6c6c6, #c6c6c6) 1793px 0 / 2px 100% no-repeat #fff; border: solid #c6c6c6; border-width: 0 1px 2px; position: relative; display: grid; grid-template-columns: 1793px 1fr; color: #000; font-feature-settings: normal; }
.p1 { height: 890px; margin-bottom: 32px; }
.p2 { height: 900px; border-top-width: 2px; }
.text { width: 1266px; margin-left: 262px; font: 35.200px/40.480px "Liberation Serif", serif; }
.p1 .text { margin-top: -18px; }
.p2 .text { margin-top: 157px; }
.l { height: 40.480px; position: relative; }
.l.in { padding-left: 53px; }
.l.j { text-align: justify; text-align-last: justify; }
.l.mid { text-align: center; padding-left: 6px; }
.l.far { padding-left: 1058px; }
.l u { text-decoration-thickness: 2px; text-underline-offset: 5px; }
.l.hl, mark { background: #ff0; color: #000; }
mark { display: inline-block; }
q { display: inline-block; width: 7px; height: 9px; margin-left: 7px; border: solid #888; border-width: 0 1.500px 1.500px 0; background: linear-gradient(45deg, #888 30%, transparent 31%) 0 100% / 6px 6px no-repeat; }
.tip { display: block; position: absolute; background: #9f9; border: 2px solid #000; font-size: 29.400px; }
.t1 { left: -7px; top: 3px; width: 832px; height: 39px; line-height: 41px; padding-left: 8px; }
.t2, .t3 { left: -5px; top: 2px; width: 574px; height: 42px; line-height: 46px; padding-left: 8px; }
.t3 { top: -1px; line-height: 48px; }
.crop { position: absolute; width: 53px; height: 53px; border: 0 solid #aaa; }
.crop.bl { left: 210px; top: 731px; border-width: 2px 2px 0 0; }
.crop.br { left: 1528px; top: 731px; border-width: 2px 0 0 2px; }
.crop.tl { left: 210px; top: 105px; border-width: 0 2px 2px 0; }
.crop.tr { left: 1528px; top: 105px; border-width: 0 0 2px 2px; }
.comment { display: flex; gap: 21px; padding-left: 27px; }
.comment > i { width: 48px; height: 48px; border-radius: 50%; background: #65307a; color: #fff; font: 19px/48px "Open Sans", sans-serif; text-align: center; flex: none; }
.comment > div { display: flex; flex-direction: column; align-items: flex-start; }
.comment b { font: 25px/27px "Liberation Serif", serif; }
.comment p { margin: 0; font: 23.500px/26.900px "Liberation Serif", serif; height: 26.900px; }
.c1 { margin-top: 0; } .c1 > div { margin-top: -4px; }
.c2 { margin-top: 377px; } .c2 > div { margin-top: -2px; }

/* status */
.status { height: 44px; flex: none; background: #f3f2f1; border-top: 2px solid #c8c6c4; display: flex; align-items: center; font-size: 24px; line-height: 42px; padding-left: 10px; }
.status > * { flex: none; }
.s2 { margin-left: 20px; } .s3 { width: 32px; height: 24px; margin: 0 16px 0 23px; }
.s4 { width: 32px; height: 36px; margin-left: 2766px; }
.s5 { width: 410px; height: 44px; margin-left: 10px; } .s6 { margin-left: 13px; }

/* bottom taskbar */
.taskbar { height: 80px; background: linear-gradient(90deg, #1c1c1e, #1f1f21 20%, #29283a 27%, #332e42 31%, #2f2d3c 42%, #3a2f36 51%, #262626 60%, #252327 82%, #2c2534 90%, #1d1d1f 96%); display: flex; align-items: center; }
.apps { display: flex; }
.taskbar .app { width: 98px; height: 80px; display: flex; align-items: center; justify-content: center; position: relative; flex: none; }
.taskbar .app.sys { width: 96px; }
.app svg { width: 48px; height: 48px; }
.taskbar .run::after { content: ""; position: absolute; left: 9px; right: 9px; bottom: 0; height: 4px; background: #8be6ec; }
.taskbar .stack::after { background: linear-gradient(90deg, #8be6ec 78%, #4d9196 78%, #4d9196 81%, #6cb5ba 81%); }
.app.cur { background: #56575a; }
.taskbar .run.cur::after { left: 0; right: 0; }
.tray-pen { width: 44px; height: 48px; margin-left: 308px; }
.clock { margin-left: 22px; width: 124px; display: flex; flex-direction: column; align-items: center; color: #fff; font-size: 23px; line-height: 37px; }

/* side taskbar */
.sidebar { height: 2160px; background: linear-gradient(#232e39, #1e2a33 3%, #191b20 7%, #1d2a34 14%, #1f3035 24%, #20303a 40%, #1f3436 44%, #1f3036 56%, #1c1e20 66%, #1b1b1b 74%, #211d22 83%, #1f3229 88%, #22352c 92%, #24222b 96%, #1b1a1e); border-right: 2px solid #555; display: flex; flex-direction: column; justify-content: space-between; overflow: hidden; }
.sidebar .apps { flex-direction: column; }
.sidebar .app { height: 47px; width: 72px; display: flex; align-items: center; justify-content: center; position: relative; }
.sidebar .app.sys { height: 40px; }
.sidebar .app svg { width: 24px; height: 24px; }
.sidebar .run::before { content: ""; position: absolute; left: 0; top: 4px; bottom: 4px; width: 2px; background: #8be6ec; }
.sidebar .stack::before { width: 4px; background: #6cb5ba; }
.side-tray { display: flex; flex-direction: column; align-items: center; color: #fff; height: 230px; }
.side-tray > * { flex: none; }
.chev { font: 17px/22px "Open Sans", sans-serif; margin-left: 38px; }
.tray3 { width: 72px; height: 18px; margin-top: 5px; }
.pen { width: 20px; height: 20px; margin-top: 8px; }
.ime { font-size: 18px; line-height: 24px; margin-top: 10px; }
.t { font-size: 12px; line-height: 17.500px; }
.ime + .t { margin-top: 16px; }
.note { width: 18px; height: 18px; margin-top: 17px; }

/* LTspice */
.lt { height: 2160px; background: #f0f0f0; display: flex; flex-direction: column; overflow: hidden; color: #000; font-size: 12px; }
.lt > * { flex: none; }
.lt-title { height: 23px; background: #fff; display: flex; align-items: center; gap: 7px; padding-left: 2px; }
.lt-title svg { width: 15px; height: 15px; }
.lt-menu { height: 21px; display: grid; grid-template-columns: 32px 38.500px 80.500px 69px 42px 58px 40px; padding-left: 7px; align-items: center; line-height: 20px; justify-items: start; }
.lt-menu span::first-letter { text-decoration: underline; }
.lt-tools { height: 37px; background: #fff; border-bottom: 2px solid #777; }
.lt-tools svg { width: 1239px; height: 36px; display: block; background: #f0f0f0; border-right: 1px solid #888; }
.lt-tabs { height: 25px; display: grid; grid-template-columns: 205px 205px 277px 277px; padding: 1px 0 1px 3px; border-bottom: 1px solid #000; }
.lt-tabs span { display: flex; align-items: center; gap: 6px; padding-left: 9px; border-right: 1px solid #bbb; line-height: 22px; font-family: "Liberation Sans", "Noto Sans CJK JP", sans-serif; }
.lt-tabs b, .win-t b { font-weight: 400; }
.lt-tabs svg { width: 15px; height: 14px; flex: none; }
.lt-tabs .on { background: #fff; }
.lt-tabs .on svg { margin-left: -1px; }
.mdi { height: 2035px; background: #111; padding-left: 2px; display: grid; grid-template-columns: 1881px 1881px; grid-template-rows: 1015px 1018px; gap: 2px 3px; }
.win { padding: 9px 8px 0; border-radius: 5px 5px 0 0; display: flex; flex-direction: column; overflow: hidden; background: linear-gradient(#bfcddb, #d7e4f2 30px); box-shadow: inset 1px 0 #eef4fb; }
.win.active { background: linear-gradient(#99b4d1, #b9d1ea 30px); }
.win-t { height: 22px; display: flex; align-items: center; color: #999fa6; line-height: 20px; padding: 0 2px 3px 2px; font-family: "Liberation Sans", "Noto Sans CJK JP", sans-serif; }
.active .win-t { color: #222; }
.win:nth-child(n+3) .win-t { margin-top: 1px; }
.win-t svg { width: 15px; height: 14px; margin-right: 5px; }
.win-t b { margin-right: auto; }
.wb { width: 31px; height: 17px; border: 1px solid #8493a8; border-radius: 2px; margin-left: 3px; background: linear-gradient(#d8e4f1, #b9cbe0); color: #555; display: flex; align-items: center; justify-content: center; font: 700 15px/15px "Liberation Sans", sans-serif; }
.wb.min::before { content: ""; width: 10px; height: 4px; border: 1px solid #555; background: #fff; margin-top: 5px; }
.wb.max::before { content: ""; width: 10px; height: 9px; border: 2px solid #666; background: #fff; }
.active .close { background: linear-gradient(#dc9a8c, #b43525); border-color: #6a2018; color: #fff; }
.client { width: 100%; height: 976px; flex: none; background: #c0c0c0; display: block; box-shadow: 0 0 0 1px #8b95a0; }
.client.white { background: #fff; }
.lt-status { height: 19px; background: #f0f0f0; border-top: 1px solid #aaa; padding-left: 3px; line-height: 18px; }
```
FILE: app.js
```js
const el = (id) => document.getElementById(id);

/* ---------- taskbars ---------- */
const sys = ['start', 'search', 'cortana', 'task'];
const apps = ['edge', 'folder:s', 'store', 'mail', 'vivaldi', 'swap', 'flash', 'ghost', 'padp', 'clip', 'cgear',
  'ppt:s', 'waltr:r', 'ring:r', 'vivaldi:s', 'word:s', 'pdf:r', 'lt:c', 'note:s', 'zoom:r', 'steam:r', 'pc:r',
  'git:r', 'slack:r', 'plane:r', 'discord:r', 'robot:s', 'file:s', 'snip:r', 'calc:r'];
const cls = { s: 'run stack', r: 'run', c: 'run cur' };
const cell = (name, extra) => `<div class="app ${extra}"><svg><use href="#i-${name}"/></svg></div>`;
const cells = sys.map((n) => cell(n, 'sys')).join('') +
  apps.map((a) => { const [n, s] = a.split(':'); return cell(n, cls[s] || ''); }).join('');
document.querySelector('#taskbar .apps').innerHTML = cells;
document.querySelector('#sidebar .apps').innerHTML = cells;

/* put each symbol's shapes straight into the icon that uses it */
document.querySelectorAll('use').forEach((use) => {
  const sym = document.querySelector(use.getAttribute('href'));
  const svg = use.parentNode;
  svg.setAttribute('viewBox', sym.getAttribute('viewBox'));
  svg.innerHTML = sym.innerHTML;
});
document.querySelectorAll('symbol').forEach((n) => n.remove());

/* ---------- fit labels to their column widths ---------- */
const k = document.querySelector('.desktop').getBoundingClientRect().width / 7680;
document.querySelectorAll('[data-w]').forEach((n) => {
  const w = n.getBoundingClientRect().width / k;
  n.style.letterSpacing = ((+n.dataset.w - w) / n.textContent.length) + 'px';
});

/* ---------- waveform plots ---------- */
function plot(id, o) {
  const X = (t) => o.x0 + (t - o.t0) * o.px;
  let s = `<rect x="${o.x0}" y="${o.y0}" width="${o.x1 - o.x0}" height="${o.y1 - o.y0}" fill="none" stroke="#adadad" stroke-width="2"/>`;
  s += '<g font-family="Liberation Sans" font-size="12.5" font-weight="700" fill="#b0b0b0">';
  o.ys.forEach(([v, y]) => { s += `<path stroke="#adadad" stroke-width="2" d="M${o.x0 - 8} ${y}h8"/><text x="${o.x0 - 8}" y="${y + 4.5}" text-anchor="end" textLength="39" lengthAdjust="spacingAndGlyphs">${v}mV</text>`; });
  for (let i = 0; i <= 11; i++) {
    const t = o.t0 + i * o.dt, x = X(t);
    s += `<path stroke="#adadad" stroke-width="2" d="M${x} ${o.y1}v7"/><text x="${Math.min(x, o.x1 - 1)}" y="${o.y1 + 20}" text-anchor="middle" textLength="42">${t.toFixed(2)}ms</text>`;
  }
  o.tr.forEach((t) => { s += `<text x="${t.lx}" y="${o.ly}" text-anchor="middle" fill="${t.c}" textLength="81">${t.n}</text>`; });
  s += '</g>';
  o.tr.forEach((t) => {
    const A = t.y - o.base;
    let d = `M${o.x0} ${o.base}H${X(5)}`;
    for (let u = 0.001; u <= 0.1001; u += 0.001) d += `L${X(5 + u).toFixed(1)} ${(o.base + A * (1 - Math.exp(-u / o.tau))).toFixed(1)}`;
    for (let u = 0.001; u <= 0.1; u += 0.001) {
      const e = Math.exp(-u / o.tau);
      d += `L${X(5.1 + u).toFixed(1)} ${(t.end + (t.y - t.end) * e).toFixed(1)}`;
    }
    s += `<path fill="none" stroke="${t.c}" stroke-width="2" d="${d}H${o.x1}"/>`;
  });
  el(id).innerHTML = s;
}
const ys1 = [], ys2 = [];
for (let i = 1; i <= 11; i++) ys1.push([-54 - 3 * i, 155.5 + 84.55 * i]);
for (let i = 1; i <= 10; i++) ys2.push([-60 - 2 * i, 1173 + 93 * i]);
plot('plot1', { x0: 3971, x1: 5764, y0: 155.5, y1: 1085.5, t0: 4.92, dt: 0.04, px: 4075, tau: 0.011, base: 606.6, ly: 151, ys: ys1, tr: [
  { n: 'V(N019,N006)', c: '#00ff00', lx: 4119.5, y: 457, end: 607 },
  { n: 'V(N016,N007)', c: '#ff00ff', lx: 5013.5, y: 757, end: 607 },
  { n: 'V(N020,N008)', c: '#808080', lx: 5311, y: 952.7, end: 608 },
  { n: 'V(N017,N004)', c: '#ff0000', lx: 4715, y: 165, end: 605.3 },
  { n: 'V(N018,N005)', c: '#0000ff', lx: 4418, y: 261, end: 606.6 },
  { n: 'V(N021,N009)', c: '#008000', lx: 5610, y: 1048.8, end: 608.4 }] });
plot('plot2', { x0: 5853, x1: 7647, y0: 1173, y1: 2103, t0: 4.95, dt: 0.03, px: 5436, tau: 0.0086, base: 1638, ly: 1168, ys: ys2, tr: [
  { n: 'V(N009,N004)', c: '#00ff00', lx: 6301, y: 1182.5, end: 1636.3 },
  { n: 'V(N008,N005)', c: '#0000ff', lx: 7196, y: 2093.7, end: 1640 }] });

/* ---------- schematics ---------- */
function Sheet(ox, oy, kx, ky, fs) {
  const x = (v) => +(ox + v * kx).toFixed(1), y = (v) => +(oy + v * ky).toFixed(1);
  let wires = '', parts = '', dots = '', texts = '';
  const u = fs * 0.75;
  const api = {
    w(...p) { for (let i = 0; i < p.length; i += 2) wires += (i ? 'L' : 'M') + x(p[i]) + ' ' + y(p[i + 1]); },
    dot(...p) { for (let i = 0; i < p.length; i += 2) dots += `M${x(p[i]) - 4} ${y(p[i + 1]) - 4}h8v8h-8z`; },
    t(tx, ty, s, a) { texts += `<text x="${x(tx)}" y="${y(ty) + fs * 0.365}" text-anchor="${a || 'start'}">${s}</text>`; },
    rv(cx, a, b) {
      const h = y(b) - y(a), X = x(cx);
      parts += `M${X} ${y(a)}L${X + u} ${y(a) + h / 8}L${X - u} ${y(a) + h * 3 / 8}L${X + u} ${y(a) + h * 5 / 8}L${X - u} ${y(a) + h * 7 / 8}L${X} ${y(b)}`;
    },
    rh(cx, cy, hw) {
      const a = x(cx - hw), l = x(cx + hw) - a, Y = y(cy);
      parts += `M${a} ${Y}L${a + l / 8} ${Y - u}L${a + l * 3 / 8} ${Y + u}L${a + l * 5 / 8} ${Y - u}L${a + l * 7 / 8} ${Y + u}L${a + l} ${Y}`;
    },
    cap(cx, top, p1, p2, bot) {
      api.w(cx, top, cx, p1); api.w(cx, p2, cx, bot);
      parts += `M${x(cx) - u} ${y(p1)}h${2 * u}M${x(cx) - u} ${y(p2)}h${2 * u}`;
    },
    v(cx, cy, horiz) {
      const r = fs * 1.49, X = x(cx), Y = y(cy), m = fs * 0.4, o = fs * 0.93;
      parts += `M${X - r} ${Y}a${r} ${r} 0 1 1 ${2 * r} 0a${r} ${r} 0 1 1 ${-2 * r} 0`;
      parts += horiz
        ? `M${X - r} ${Y}h${r * 0.6}M${X + o} ${Y - m}v${2 * m}M${X + o - m} ${Y}H${X + r}`
        : `M${X - m} ${Y - o}h${2 * m}M${X - m} ${Y + o}h${2 * m}M${X} ${Y + o - m}V${Y + r}`;
    },
    gnd(cx, cy, h) { parts += `M${x(cx) - u} ${y(cy)}h${2 * u}L${x(cx)} ${y(cy + h)}z`; },
    done(id) {
      el(id).innerHTML = `<g fill="none" stroke-width="1.4"><path stroke="#0000ff" d="${wires}"/><path stroke="#000088" d="${parts}"/></g><path fill="#0000ff" d="${dots}"/><g font-family="DejaVu Sans" font-size="${fs}" fill="#000" stroke="#000" stroke-width="1.2">${texts}</g>`;
    }
  };
  return api;
}

/* single cell pair */
let s = Sheet(5780, 100, 1.2117, 0.6633, 17.6);
s.v(658, 370, true); s.t(658, 315, 'V3', 'middle');
s.w(501, 469, 501, 370, 636, 370); s.w(679, 370, 999, 370, 999, 409); s.w(912, 370, 912, 469); s.gnd(999, 409, 22);
s.t(399, 427, 'PWL(0 0 5.0ms 0 5.1ms -2.5 25ms -2.5 25.2ms 2.5 45ms 2.5 45.1ms 0)');
[[501, 458, 534, 'R8', 'C3', 'R6'], [912, 880, 966, 'R9', 'C4', 'R7']].forEach(([m, r, c, rn, cn, rb]) => {
  s.w(r, 518, r, 469, c, 469); s.w(r, 598, r, 667, c, 667); s.rv(r, 518, 598); s.cap(c, 469, 562, 572, 667);
  s.t(r + 13, 540, rn); s.t(r + 13, 584, '50k'); s.t(c + 5, 540, cn); s.t(c + 5, 599, '500nF');
  s.w(m, 667, m, 775); s.rv(m, 775, 855); s.w(m, 855, m, 864); s.t(m + 13, 796, rb); s.t(m + 13, 839, '50');
  s.dot(m, 469, m, 667, m, 726, m, 864, m, 1181); s.w(m, 1181, m, 1220);
});
s.w(501, 726, 669, 726); s.w(711, 726, 912, 726); s.rh(690, 726, 21.5); s.t(690, 691, 'R5', 'middle'); s.t(690, 763, '50', 'middle');
s.w(414, 864, 669, 864); s.w(711, 864, 977, 864); s.rh(690, 864, 21.5); s.t(690, 829, 'R4', 'middle'); s.t(690, 902, '10', 'middle');
[[414, 566, 'R1', 'C1', 'V1'], [826, 977, 'R2', 'C2', 'V2']].forEach(([r, c, rn, cn, vn]) => {
  s.w(r, 864, r, 914); s.rv(r, 914, 993); s.w(r, 993, r, 1051); s.v(r, 1091); s.w(r, 1130, r, 1181, c, 1181);
  s.cap(c, 864, 1017, 1027, 1181); s.t(r + 13, 934, rn); s.t(r + 13, 978, '400Meg'); s.t(r - 16, 1043, vn, 'end');
  s.t(r - 16, 1141, '-70m', 'end'); s.t(c + 5, 993, cn); s.t(c + 5, 1052, '6p');
});
s.dot(566, 864, 826, 864, 977, 1062, 912, 370);
s.w(501, 1220, 626, 1220); s.w(669, 1220, 912, 1220); s.rh(647.5, 1220, 21.5); s.t(647, 1185, 'R3', 'middle'); s.t(647, 1257, '1k', 'middle');
s.t(961, 1250, '.tran 0 50ms 0 0.0001ms');
s.done('sch1');

/* six cell chain */
s = Sheet(3900, 1110, 1.2117, 0.6696, 15.95);
s.v(731, 373, true); s.t(731, 325, 'V3', 'middle');
s.w(592, 460, 592, 373, 712, 373); s.w(750, 373, 1036, 373, 1036, 409); s.w(959, 373, 959, 460); s.gnd(1036, 409, 19); s.dot(959, 373);
s.t(497, 425, 'PWL(0 0 5.0ms 0 5.1ms -2.5 25ms -2.5 25.2ms 2.5 45ms 2.5 45.1ms 0)');
[[592, 553, 621, 'R8', 'C3'], [959, 930, 1007, 'R9', 'C4']].forEach(([m, r, c, rn, cn]) => {
  s.w(r, 504, r, 460, c, 460); s.w(r, 574, r, 635, c, 635); s.rv(r, 504, 574); s.cap(c, 460, 544, 553, 635);
  s.t(r + 12, 524, rn); s.t(r + 12, 564, '50k'); s.t(c + 4, 524, cn); s.t(c + 4, 575, '500nF');
  s.w(m, 635, m, 723); s.dot(m, 460, m, 635);
});
s.w(137, 723, 592, 723); s.w(959, 723, 1481, 723); s.dot(369, 723, 592, 723, 959, 723, 1210, 723);
[[137, 'R16'], [369, 'R15'], [592, 'R5'], [959, 'R6'], [1210, 'R18'], [1481, 'R19']].forEach(([r, n]) => {
  s.w(r, 723, r, 732); s.rv(r, 732, 802); s.w(r, 802, r, 811); s.dot(r, 811); s.t(r + 12, 751, n); s.t(r + 12, 790, '60');
});
[[258, 'R28'], [480, 'R27'], [761, 'R4'], [1079, 'R30'], [1340, 'R31']].forEach(([r, n]) => {
  s.rh(r, 811, 19.5); s.t(r, 780, n, 'middle'); s.t(r, 844, '1.7', 'middle');
});
s.w(50, 811, 239, 811); s.w(277, 811, 461, 811); s.w(500, 811, 741, 811); s.w(780, 811, 1060, 811); s.w(1099, 811, 1321, 811); s.w(1360, 811, 1539, 811);
[[70, 205, 128, 'R12', 'V7', 'C8'], [302, 437, 360, 'R7', 'V4', 'C5'], [514, 649, 592, 'R1', 'V1', 'C1'],
  [881, 1017, 959, 'R2', 'V2', 'C2'], [1142, 1278, 1210, 'R10', 'V5', 'C6'], [1403, 1539, 1481, 'R11', 'V6', 'C7']].forEach(([r, c, m, rn, vn, cn]) => {
  s.w(r, 811, r, 854); s.rv(r, 854, 924); s.w(r, 924, r, 977); s.v(r, 1012); s.w(r, 1046, r, 1090, c, 1090);
  s.cap(c, 811, 945, 955, 1090); s.t(r + 12, 874, rn); s.t(r + 12, 913, '2400Meg'); s.t(r - 15, 969, vn, 'end');
  s.t(r - 15, 1056, '-70m', 'end'); s.t(c + 4, 926, cn); s.t(c + 4, 979, '1p');
  s.dot(r, 811, m, 1090); if (c < 1500) s.dot(c, 811);
  if (m > 200) { s.w(m, 1090, m, 1125); if (m < 1400) s.dot(m, 1125); }
});
s.dot(1017, 986);
s.w(128, 1090, 128, 1142, 234, 1142, 234, 1125, 239, 1125);
[[258, 'R25'], [470, 'R24'], [722, 'R3'], [1079, 'R21'], [1340, 'R22']].forEach(([r, n]) => {
  s.rh(r, 1125, 19.5); s.t(r, 1095, n, 'middle'); s.t(r, 1159, '170', 'middle');
});
s.w(277, 1125, 451, 1125); s.w(490, 1125, 703, 1125); s.w(741, 1125, 1060, 1125); s.w(1099, 1125, 1321, 1125); s.w(1360, 1125, 1481, 1125);
s.t(1157, 1276, '.tran 0 50ms 0 0.001ms');
s.done('sch2');

/* ---------- LTspice toolbar ---------- */
const tool = [
  [3940, '<path fill="#fff" stroke="#000" stroke-width="1.5" d="M-9-9H9V9H-9z"/><path d="M-4-6L6 0-4 6z"/>'],
  [3972, '<path fill="#e8e070" stroke="#000" d="M-10 8V-6h7l2 3h8v4M-10 8L-5 0h16L6 8z"/>'],
  [4010, '<path fill="#8a8a20" stroke="#000" stroke-width="1.5" d="M-9-9H9V9H-9z"/><path fill="#fff" d="M-5-9H5v7H-5z"/><path d="M-5 3H5v6H-5z"/>'],
  [4049, '<path fill="#555" stroke="#000" d="M-11-2q2-7 8-7H6l5 5-4 3-3-3H-4l-3 3z"/><path fill="#22f" d="M-2-3h5V10h-5z"/>'],
  [4087, '<g fill="none" stroke="#000" stroke-width="2"><path d="M-10 0L-3-6 4-5l5 5M3-5L-1 3l6 2v5M-1 3l-9 5"/></g><circle cx="7" cy="-9" r="2.500"/>'],
  [4119, '<path fill="#ccc" stroke="#999" stroke-width="1.500" d="M-5 10l-4-8 3-1 1 2v-9h3v-3h3v2h3v2h3v9l-2 6z"/>'],
  [4158, '<circle cx="-2" cy="-2" r="7" fill="#fff" stroke="#000" stroke-width="2"/><path stroke="#000" stroke-width="2" d="M4 4l7 6M-6-2h8M-2-6v8"/>'],
  [4189, '<circle cx="-2" cy="-2" r="7" fill="#dff" stroke="#000" stroke-width="2"/><path stroke="#000" stroke-width="2.500" d="M4 4l7 6"/>'],
  [4220, '<circle cx="-2" cy="-2" r="7" fill="#fff" stroke="#000" stroke-width="2"/><path stroke="#000" stroke-width="2" d="M4 4l7 6M-6-2h8"/>'],
  [4251, '<circle cx="-2" cy="-2" r="7" fill="#fff" stroke="#000" stroke-width="2"/><path stroke="#000" stroke-width="2" d="M4 4l7 6"/><path stroke="#d00" stroke-width="2.500" d="M-10-8L9 7M9-8L-10 8"/>'],
  [4290, '<g fill="none" stroke-width="1.500"><path stroke="#00a" d="M-11-4l5-3 5 3 5-3 6 3"/><path stroke="#a00" d="M-11 3l5-3 5 3 5-3 6 3"/><path stroke="#000" stroke-dasharray="2 1" d="M-11 8h22M-11-9v18"/></g>'],
  [4321, '<g fill="none" stroke-width="1.500"><path stroke="#000" d="M-9-9V9M-11 7h22M9-9V9"/><path stroke="#a00" d="M8-8L-4-1 8 6"/></g>'],
  [4360, '<path fill="#fff" stroke="#008" stroke-width="2" d="M-11-9h22v8h-22zM-11 1h22v8h-22z"/><path fill="#008" d="M-11-10h22v4h-22zM-11 0h22v4h-22z"/>'],
  [4391, '<path fill="#fff" stroke="#008" stroke-width="2" d="M-11-9H2v7h-13zM-6-4H7v7H-6zM-1 2h12v7H-1z"/><path fill="#008" d="M-11-10H2v3h-13zM-6-5H7v3H-6zM-1 1h12v3H-1z"/>'],
  [4422, '<path fill="#fff" stroke="#008" stroke-width="2" d="M-11-9H2v7h-13zM-6-4H7v7H-6zM-1 2h12v7H-1z"/><path fill="none" stroke="#000" stroke-width="1.500" d="M4-9h6v6"/>'],
  [4462, '<g fill="none" stroke="#008" stroke-width="2"><path stroke="#000" d="M-4-10L3 3M4-10L-3 3"/><circle cx="-4" cy="6" r="3"/><circle cx="4" cy="6" r="3"/></g>'],
  [4492, '<path fill="#fff" stroke="#008" stroke-width="1.500" d="M-11-9H0V4h-11zM-1-4h8l4 4v9H-1z"/><path stroke="#008" d="M1 2h7M1 5h7M-9-5h6M-9-2h6"/>'],
  [4524, '<path fill="#bbb" stroke="#888" stroke-width="1.500" d="M-10-7H6V8h-16z"/><path fill="#eee" stroke="#888" d="M-2-1H10V10H-2z"/>'],
  [4555, '<path d="M-8-8h5v5h6v-5h5l3 16H3V2h-6v6h-8z"/>'],
  [4594, '<path fill="#ddd" stroke="#000" stroke-width="1.500" d="M-7-2l3-7H7L5-2zM-11-1h22V6h-22zM-8 6H8v3H-8z"/>'],
  [4624, '<path fill="#fff" stroke="#000" stroke-width="1.500" d="M-6-2l3-8H9L6-2zM-11 0l4-3H11V6L7 9h-18z"/>'],
  [4664, '<path fill="#999" d="M-8 6L1-9l5 3L-3 8zM-10 8H11v2h-21z"/>'],
  [4694, '<path class="g" d="M0-9v9M-11 0h22L0 9z"/>'],
  [4725, '<path class="g" d="M-11-7h22v12H-11zM0 5v5M-3 3v-7h6v7M-3 0h6"/>'],
  [4756, '<path class="g" d="M2-10v4l6 2L-6 1l8 3v6"/>'],
  [4786, '<path class="g" d="M0-10v8M-9-2H9M-9 2H9M0 2v8"/>'],
  [4817, '<path class="g" d="M-3-9q7 0 6 4 0 3-6 4 7 0 6 5 0 4-6 5"/>'],
  [4849, '<path class="g" d="M-11-5h22L0 4zM-11 5h22M0-10v20"/>'],
  [4879, '<path class="g" d="M-6-7h5q8 3 8 7t-8 7h-5zM-11-4h5M-11 4h5M7 0h5"/>'],
  [4911, '<path class="g" d="M-5 9l-6-11 3-1 3 4-2-9 3-1 2 6 1-7h3l1 7 4-6 2 2-3 8 4-2 1 2-9 8z"/>'],
  [4941, '<path class="g" d="M-4 8l-5-8 3-2 2 1v-5h3l2-1 2 1h3l3 2v7L5 8z"/>'],
  [4973, '<path fill="none" stroke="#000" stroke-width="2" d="M-9-3v5h6M-9 1Q-2-10 7-4q6 8-3 12"/>'],
  [5004, '<path class="g" d="M9-3v5H3M9 1Q2-10-6-4q-7 8 3 11"/>'],
  [5035, '<path class="g" d="M-3-2h-8V9h8M-11 4h7M0 9V3h11v6M6 9V3M-8-6q5-5 14-2v4"/>'],
  [5066, '<path class="g" d="M-3-2h-8V9h8M-11 4h7M3-2h8V9H3M11 4H5M-8-6q5-5 14-2v4"/>'],
  [5097, '<text x="-11" y="7" font-family="Liberation Serif" font-weight="700" font-style="italic" font-size="19" fill="#999">Aa</text>'],
  [5127, '<text x="-12" y="5" font-family="DejaVu Sans" font-weight="700" font-size="15" fill="#999" textLength="22" lengthAdjust="spacingAndGlyphs">.op</text>']
];
let tb = '<style>.g{fill:none;stroke:#999;stroke-width:2}</style>';
tool.forEach(([x, g]) => { tb += `<g transform="translate(${x} 62)">${g}</g>`; });
[3989, 4028, 4067, 4137, 4269, 4340, 4441, 4573, 4643].forEach((x) => { tb += `<path stroke="#888" d="M${x}.5 52v20"/>`; });
tb += '<path stroke="#aaa" stroke-width="2" stroke-dasharray="2 2" d="M3918 51v22"/>';
el('tools').innerHTML = tb;
```
